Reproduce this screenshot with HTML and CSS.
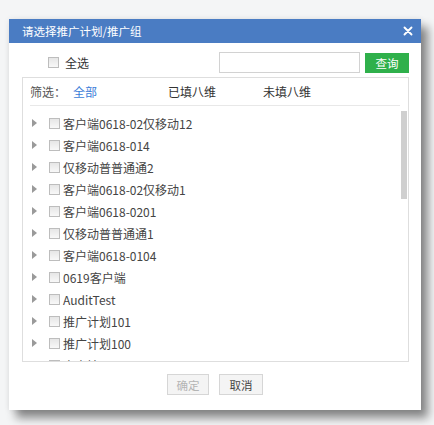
FILE: index.html
```html
<!DOCTYPE html>
<html lang="zh-CN">
<head>
  <meta charset="UTF-8">
  <title>请选择推广计划/推广组</title>
  <link rel="stylesheet" href="styles.css">
</head>
<body>

<div class="dialog">
  <div class="dialog-title">
    <span>请选择推广计划/推广组</span>
    <svg class="close" width="10" height="10" viewBox="0 0 10 10">
      <path d="M1.5 1.5L8.5 8.5M8.5 1.5L1.5 8.5" stroke="#fff" stroke-width="1.9" stroke-linecap="round"/>
    </svg>
  </div>

  <div class="toolbar">
    <label class="check-all"><span class="box"></span>全选</label>
    <input type="text" class="search">
    <button class="btn-search">查询</button>
  </div>

  <div class="panel">
    <div class="filter">
      <span class="filter-label">筛选：</span>
      <span class="filter-item active">全部</span>
      <span class="filter-item">已填八维</span>
      <span class="filter-item">未填八维</span>
    </div>
    <ul class="tree">
      <li><i class="arrow"></i><span class="box"></span>客户端0618-02仅移动12</li>
      <li><i class="arrow"></i><span class="box"></span>客户端0618-014</li>
      <li><i class="arrow"></i><span class="box"></span>仅移动普普通通2</li>
      <li><i class="arrow"></i><span class="box"></span>客户端0618-02仅移动1</li>
      <li><i class="arrow"></i><span class="box"></span>客户端0618-0201</li>
      <li><i class="arrow"></i><span class="box"></span>仅移动普普通通1</li>
      <li><i class="arrow"></i><span class="box"></span>客户端0618-0104</li>
      <li><i class="arrow"></i><span class="box"></span>0619客户端</li>
      <li><i class="arrow"></i><span class="box"></span>AuditTest</li>
      <li><i class="arrow"></i><span class="box"></span>推广计划101</li>
      <li><i class="arrow"></i><span class="box"></span>推广计划100</li>
      <li><i class="arrow"></i><span class="box"></span>客户端0618-01</li>
    </ul>
    <div class="scroll-thumb"></div>
  </div>

  <div class="footer">
    <button class="btn btn-disabled">确定</button>
    <button class="btn">取消</button>
  </div>
</div>

</body>
</html>
```

FILE: styles.css
```css
html, body { margin: 0; padding: 0; }
body {
  width: 434px;
  height: 425px;
  overflow: hidden;
  background: #f4f5f6;
  font-family: "Noto Sans CJK SC", "DejaVu Sans", sans-serif;
  font-size: 12px;
  color: #444;
}

.dialog {
  width: 412px;
  height: 391px;
  margin: 19px 0 0 9px;
  background: #fff;
  display: flex;
  flex-direction: column;
  box-shadow: 7px 8px 9px rgba(0, 0, 0, 0.45), 0 0 6px rgba(0, 0, 0, 0.08);
}

.dialog-title {
  height: 24px;
  background: #4a7cc3;
  color: #fff;
  display: flex;
  align-items: center;
  justify-content: space-between;
  padding: 0 8px 0 13px;
  font-size: 11.5px;
}
.close { display: block; }

.toolbar {
  height: 21px;
  margin: 9px 12px 0 39px;
  display: flex;
  align-items: center;
}
.check-all {
  display: flex;
  align-items: center;
  color: #333;
}
.check-all .box { margin-right: 6px; }
.search {
  margin-left: auto;
  width: 141px;
  height: 21px;
  box-sizing: border-box;
  border: 1px solid #d2d2d2;
  padding: 0 4px;
}
.btn-search {
  margin-left: 5px;
  width: 44px;
  height: 20px;
  border: none;
  background: #2fb04b;
  color: #fff;
  font-family: inherit;
  font-size: 11.5px;
  padding: 0;
}

.box {
  display: inline-block;
  width: 9px;
  height: 9px;
  border: 1px solid #bdbdbd;
  background: linear-gradient(#e6e6e6, #f8f8f8);
  flex: none;
}

.panel {
  position: relative;
  margin: 4px 12px 0 13px;
  height: 285px;
  box-sizing: border-box;
  border: 1px solid #dedede;
  display: flex;
  flex-direction: column;
}

.filter {
  height: 27px;
  margin: 0 8px 0 7px;
  border-bottom: 1px solid #e8e8e8;
  display: flex;
  align-items: center;
  flex: none;
}
.filter-label { width: 43px; color: #555; }
.filter-item { width: 95px; color: #333; }
.filter-item.active { color: #3b7dd8; }

.tree {
  list-style: none;
  margin: 0;
  padding: 6px 0 0 0;
  flex: 1;
  overflow: hidden;
}
.tree li {
  height: 22px;
  display: flex;
  align-items: center;
  padding-left: 9px;
  color: #444;
  white-space: nowrap;
}
.tree .box { margin-right: 3px; }
.arrow {
  width: 0;
  height: 0;
  border-left: 5px solid #9a9a9a;
  border-top: 4px solid transparent;
  border-bottom: 4px solid transparent;
  margin-right: 12px;
}

.scroll-thumb {
  position: absolute;
  top: 33px;
  right: 1px;
  width: 6px;
  height: 88px;
  background: #cfcfcf;
}

.footer {
  margin-top: 12px;
  display: flex;
  justify-content: center;
  gap: 10px;
}
.btn {
  width: 44px;
  height: 21px;
  border: 1px solid #d6d6d6;
  background: #f4f4f4;
  color: #444;
  font-family: inherit;
  font-size: 11.5px;
  padding: 0;
}
.btn-disabled { color: #b5b5b5; width: 42px; }
```
